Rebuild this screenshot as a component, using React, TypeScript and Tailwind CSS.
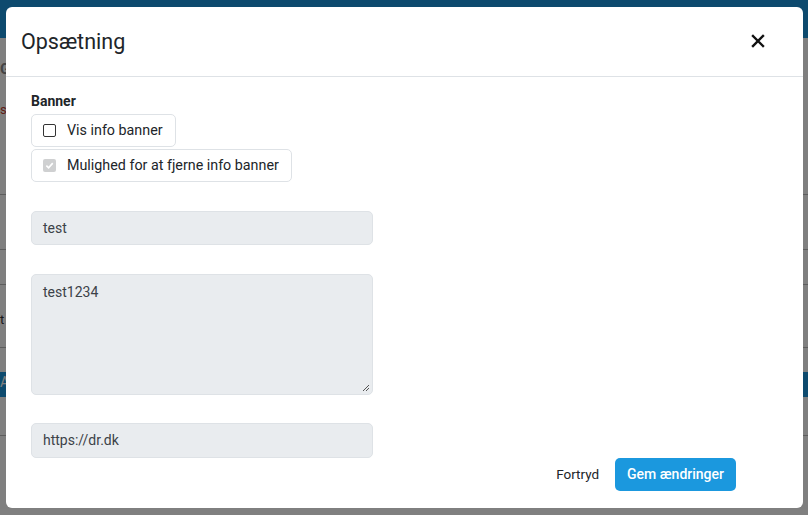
import React from 'react';

const font = { fontFamily: 'Roboto, "Liberation Sans", sans-serif' };

function BackgroundPage() {
  return (
    <div className="h-[515px] w-[808px] overflow-hidden bg-white">
      <div className="h-[38px] bg-[#1a94dc]" />
      <div className="pl-0">
        <div className="h-[30px] pt-[20px] pl-0 text-[15px] font-bold text-[#888]">G</div>
        <div className="mt-[32px] text-[13px] text-[#c0392b]">s</div>
        <div className="mt-[74px] border-t border-[#bbb]" />
        <div className="mt-[54px] border-t border-[#bbb]" />
        <div className="mt-[34px] border-t border-[#bbb]" />
        <div className="mt-[25px] text-[13px] text-[#333]">t</div>
        <div className="mt-[18px] border-t border-[#bbb]" />
        <div className="mt-[24px] h-[25px] bg-[#1a94dc] text-[14px] text-white">A</div>
        <div className="mt-[38px] border-t border-[#bbb]" />
      </div>
    </div>
  );
}

export default function App() {
  return (
    <div className="relative h-[515px] w-[808px] overflow-hidden" style={font}>
      <BackgroundPage />
      <div className="absolute inset-0 bg-black/50" />
      <div className="absolute left-[6px] top-[7px] flex h-[501px] w-[797px] flex-col rounded-[6px] bg-white">
        <div className="flex h-[70px] items-center justify-between border-b border-[#dee2e6] pl-[15px] pr-[38px]">
          <h5 className="mt-[1px] text-[21.5px] text-[#212529]">Opsætning</h5>
          <svg width="14" height="14" viewBox="0 0 14 14" className="mb-[2px]">
            <path d="M2 2 L12 12 M12 2 L2 12" stroke="#111" strokeWidth="2.4" strokeLinecap="square" />
          </svg>
        </div>
        <div className="flex flex-1 flex-col pl-[25px] pt-[17px]">
          <div className="text-[14px] font-bold leading-[15px] text-[#212529]">Banner</div>
          <div className="mt-[5px] flex flex-col items-start gap-[2px]">
            <label className="flex h-[33px] items-center gap-[11px] rounded-[5px] border border-[#dee2e6] pl-[11px] pr-[12px] text-[14.3px] text-[#212529]">
              <span className="h-[13px] w-[13px] rounded-[2px] border border-[#333] bg-white" />
              Vis info banner
            </label>
            <label className="flex h-[33px] items-center gap-[11px] rounded-[5px] border border-[#dee2e6] pl-[11px] pr-[12px] text-[14.3px] text-[#212529]">
              <span className="flex h-[13px] w-[13px] items-center justify-center rounded-[2px] bg-[#cfd0d1]">
                <svg width="9" height="9" viewBox="0 0 10 10">
                  <path d="M1.5 5.2 L4 7.6 L8.6 2.4" stroke="#fff" strokeWidth="1.8" fill="none" />
                </svg>
              </span>
              Mulighed for at fjerne info banner
            </label>
          </div>
          <div className="mt-[29px] flex h-[34px] w-[342px] items-center rounded-[5px] border border-[#dee2e6] bg-[#e9ecef] pl-[11px] text-[14px] text-[#3c4248]">
            test
          </div>
          <div className="relative mt-[29px] h-[121px] w-[342px] rounded-[5px] border border-[#dee2e6] bg-[#e9ecef] pl-[11px] pt-[7px] text-[14px] text-[#3c4248]">
            test1234
            <svg width="8" height="8" viewBox="0 0 8 8" className="absolute bottom-[2px] right-[2px]">
              <path d="M7 1 L1 7 M7 4 L4 7" stroke="#555" strokeWidth="1" />
            </svg>
          </div>
          <div className="flex items-start">
            <div className="mt-[28px] flex h-[35px] w-[342px] items-center rounded-[5px] border border-[#dee2e6] bg-[#e9ecef] pl-[11px] text-[14px] text-[#3c4248]">
              https://dr.dk
            </div>
            <div className="ml-auto mr-[67px] mt-[63px] flex items-center gap-[16px]">
              <span className="text-[13.5px] text-[#212529]">Fortryd</span>
              <button className="h-[33px] rounded-[5px] bg-[#1b98de] px-[12px] text-[14px] font-medium text-white">
                Gem ændringer
              </button>
            </div>
          </div>
        </div>
      </div>
    </div>
  );
}
